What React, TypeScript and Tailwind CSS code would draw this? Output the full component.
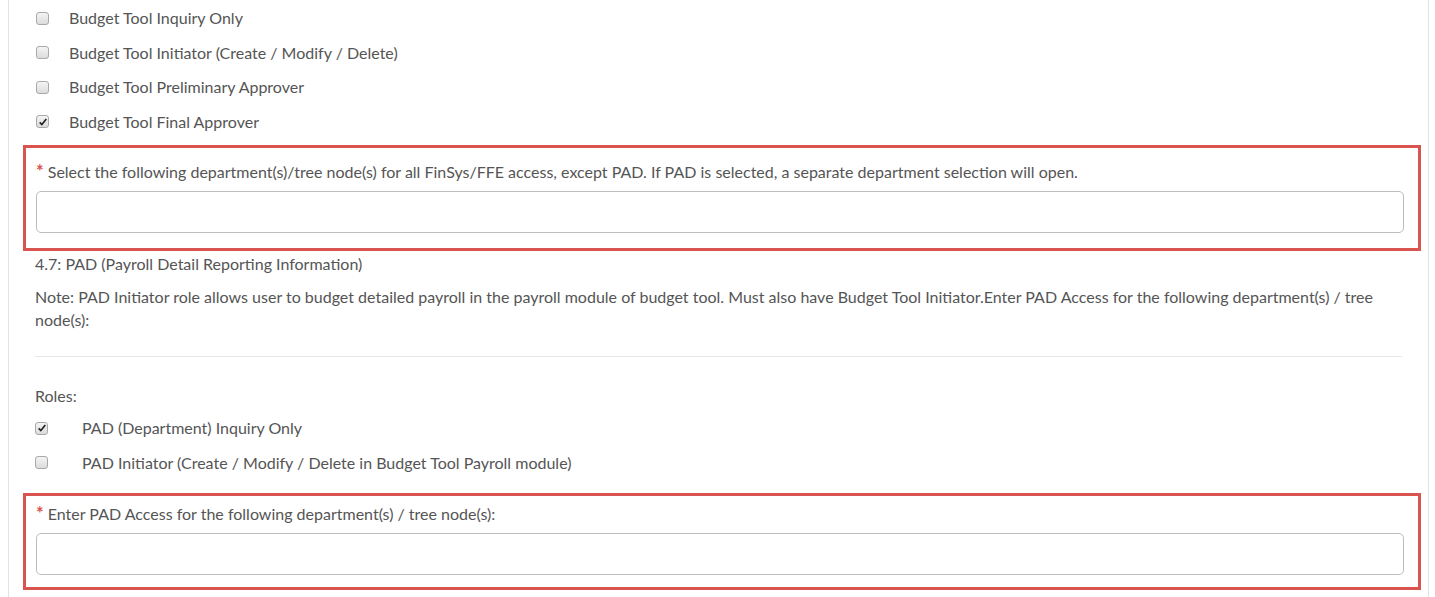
const Box = ({ checked }: { checked?: boolean }) => (
  <span className="w-[13px] h-[13px] rounded-[3px] border border-[#a9a9a9] bg-gradient-to-b from-[#f4f4f4] to-[#dcdcdc] flex items-center justify-center shrink-0">
    {checked && (
      <svg viewBox="0 0 12 12" className="w-[10px] h-[10px]">
        <path d="M2 6.5 L4.6 9 L10 2.5" fill="none" stroke="#222" strokeWidth="2" />
      </svg>
    )}
  </span>
);

const Row = ({ label, checked, indent }: { label: string; checked?: boolean; indent: string }) => (
  <div className="flex items-center h-[34.5px]">
    <Box checked={checked} />
    <span className={indent}>{label}</span>
  </div>
);

const Required = ({ label, mt, pad }: { label: string; mt: string; pad: string }) => (
  <div className={`border-[3px] border-[#d9534f] ml-[14px] mr-[7px] pl-[10px] pr-[14px] ${pad} ${mt}`}>
    <div className="leading-[22px]">
      <span className="text-[#d9534f] font-bold text-[18px]">*</span> {label}
    </div>
    <div className="mt-[8px] h-[42px] border border-[#bdbdbd] rounded-[5px] bg-white" />
  </div>
);

export default function App() {
  return (
    <div className="w-[1435px] h-[597px] overflow-hidden bg-white text-[#555] text-[16px]" style={{ fontFamily: 'Lato, "Open Sans", sans-serif' }}>
      <div className="ml-[8px] mr-[6px] h-full border-l border-r border-[#e3e3e3]">
        <div className="pl-[27px] pt-[1px]">
          <Row label="Budget Tool Inquiry Only" indent="ml-[20px]" />
          <Row label="Budget Tool Initiator (Create / Modify / Delete)" indent="ml-[20px]" />
          <Row label="Budget Tool Preliminary Approver" indent="ml-[20px]" />
          <Row label="Budget Tool Final Approver" checked indent="ml-[20px]" />
        </div>
        <Required mt="mt-[6px]" pad="pt-[12px] pb-[15px]" label="Select the following department(s)/tree node(s) for all FinSys/FFE access, except PAD. If PAD is selected, a separate department selection will open." />
        <div className="pl-[26px] pr-[26px]">
          <div className="mt-[1px] leading-[24px]">4.7: PAD (Payroll Detail Reporting Information)</div>
          <div className="mt-[9px] leading-[23px]">
            Note: PAD Initiator role allows user to budget detailed payroll in the payroll module of budget tool. Must also have Budget Tool Initiator.Enter PAD Access for the following department(s) / tree node(s):
          </div>
          <div className="mt-[25px] border-t border-[#e8e8e8]" />
          <div className="mt-[27px] leading-[24px]">Roles:</div>
          <div className="mt-[3px]">
            <Row label="PAD (Department) Inquiry Only" checked indent="ml-[34px]" />
            <Row label="PAD Initiator (Create / Modify / Delete in Budget Tool Payroll module)" indent="ml-[34px]" />
          </div>
        </div>
        <Required mt="mt-[13px]" pad="pt-[6px] pb-[12px]" label="Enter PAD Access for the following department(s) / tree node(s):" />
      </div>
    </div>
  );
}
